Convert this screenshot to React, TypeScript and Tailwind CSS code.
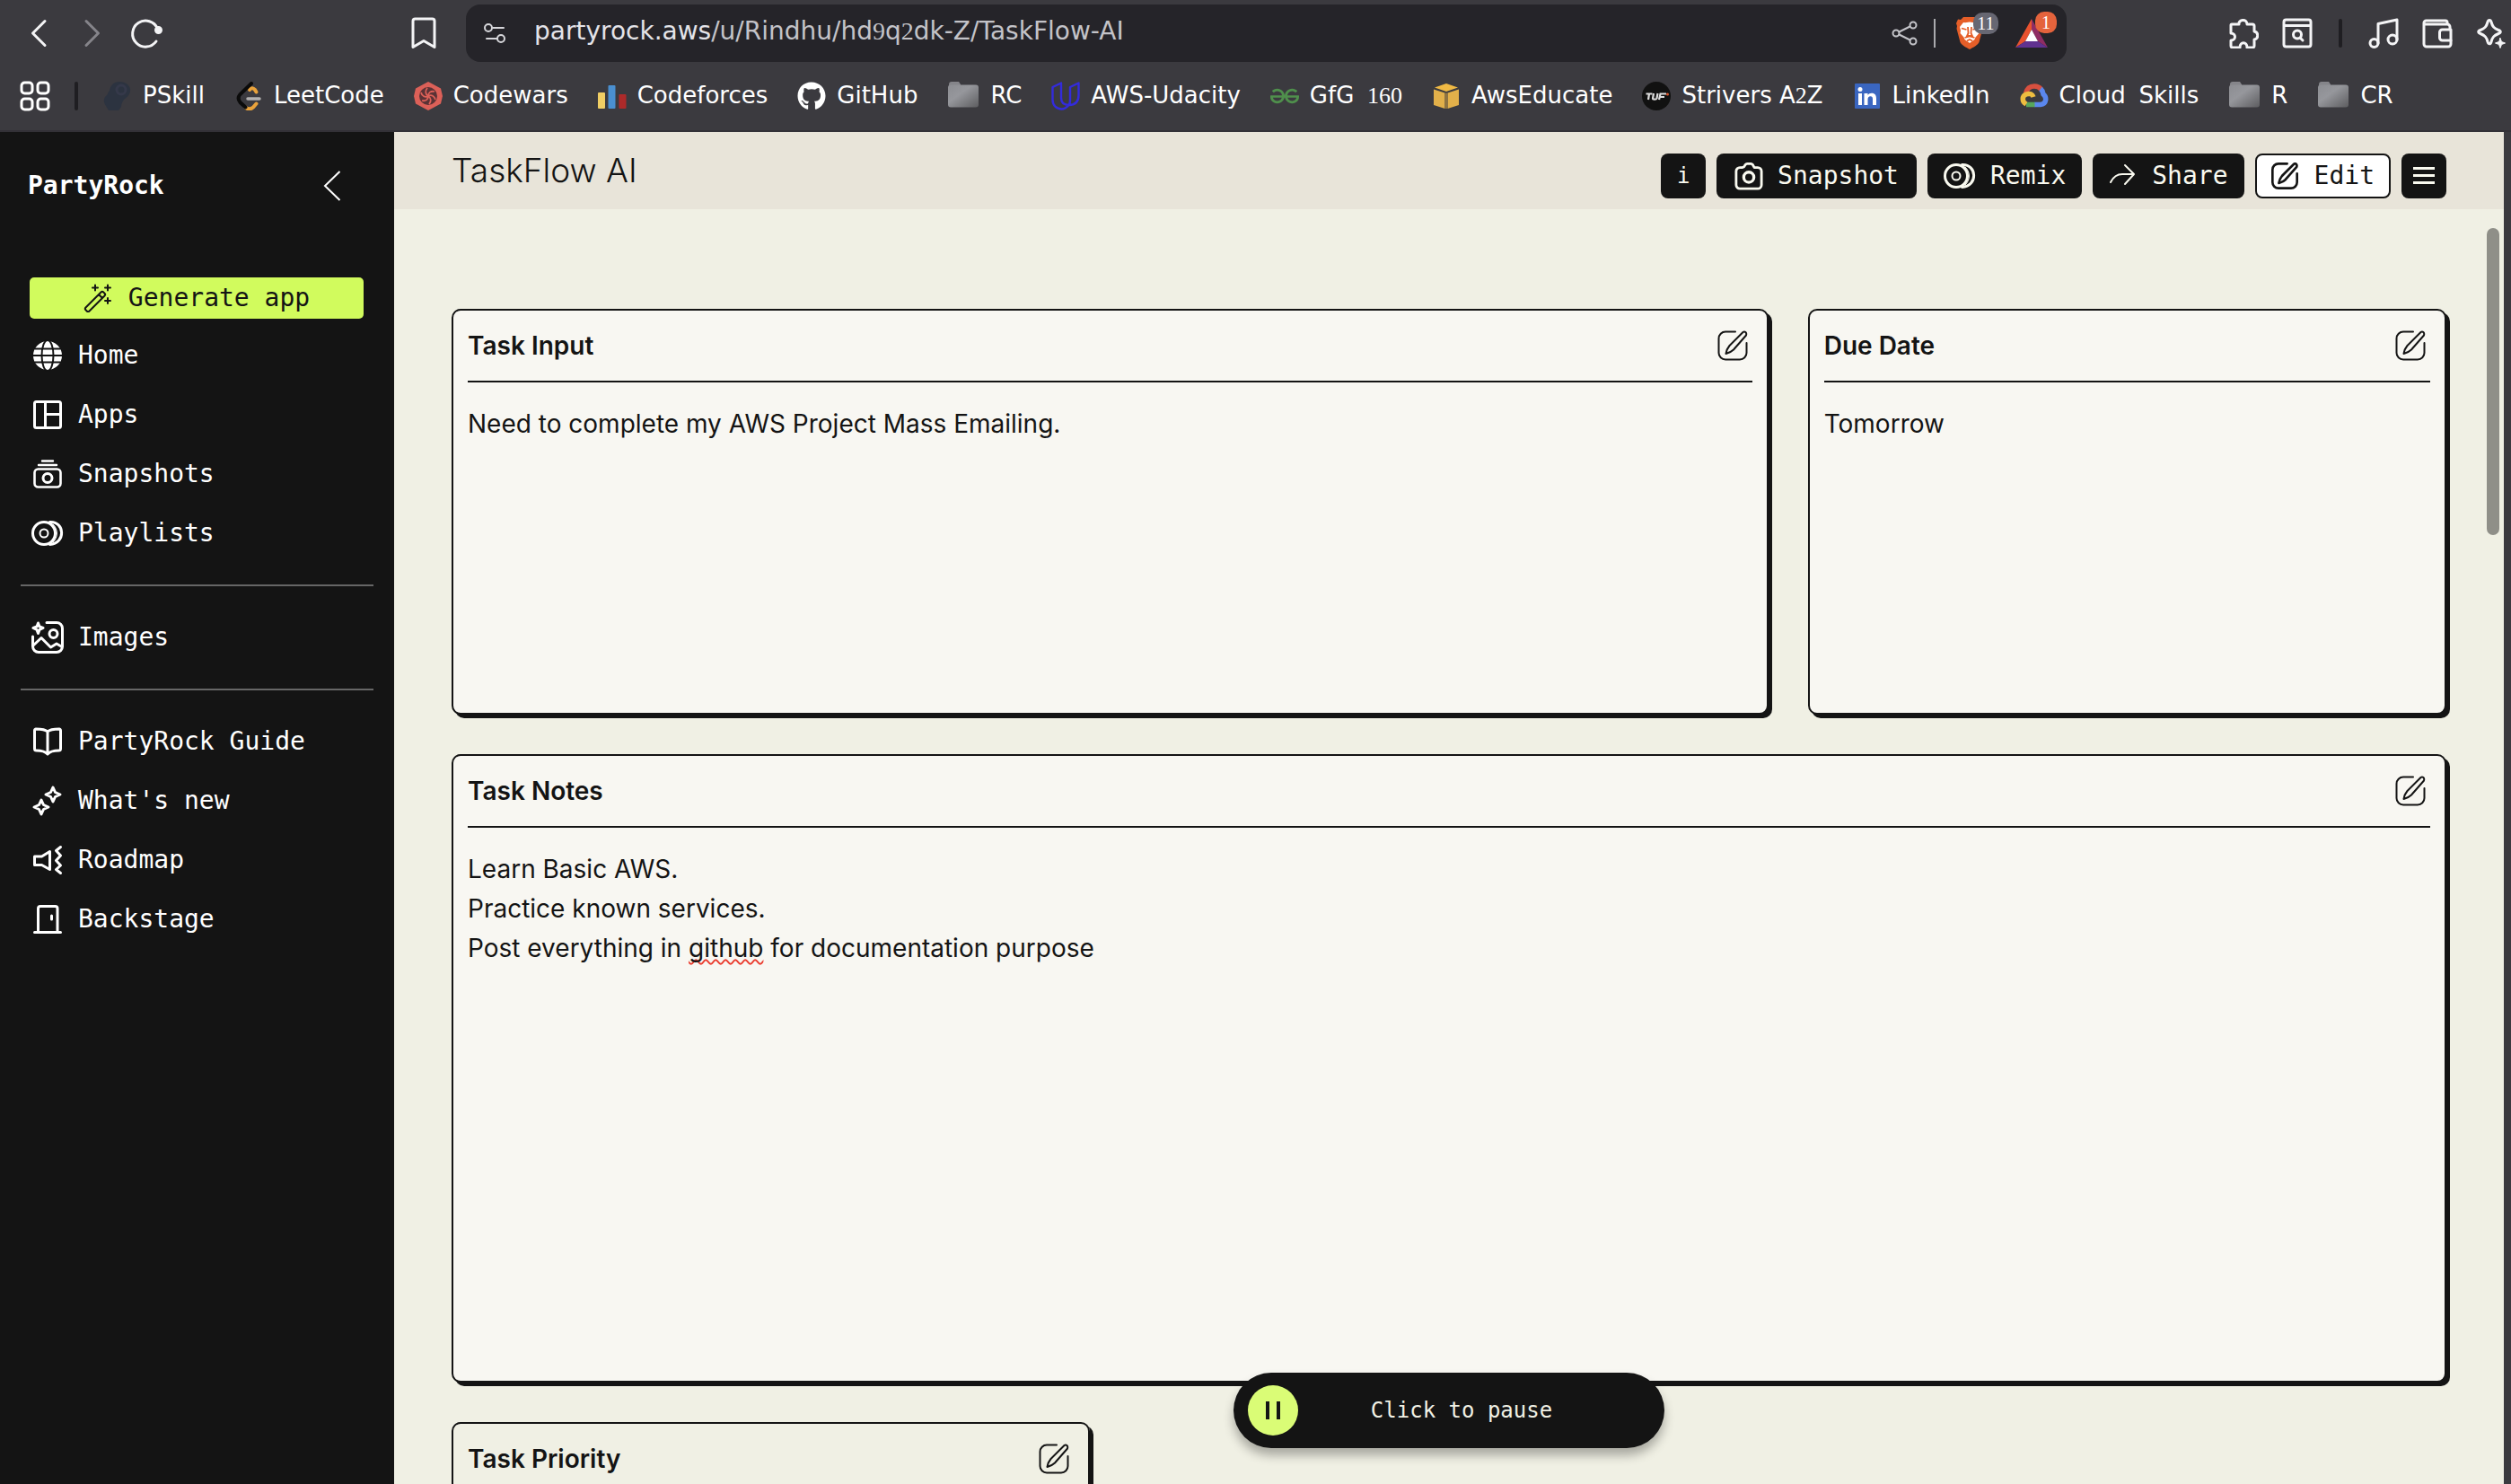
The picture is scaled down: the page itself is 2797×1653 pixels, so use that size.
import type { ReactNode } from "react";
import { FaGithub } from "react-icons/fa";
import { SiGeeksforgeeks } from "react-icons/si";

const MONO = "font-['DejaVu_Sans_Mono','Liberation_Mono',monospace]";

function Digits({ children }: { children: ReactNode }) {
  return <span className="font-['Liberation_Serif',serif]">{children}</span>;
}

/* ---------- toolbar icons ---------- */

function Stroke({
  size = 34,
  width = 3,
  box = 34,
  children,
}: {
  size?: number;
  width?: number;
  box?: number;
  children: ReactNode;
}) {
  return (
    <svg
      width={size}
      height={size}
      viewBox={`0 0 ${box} ${box}`}
      fill="none"
      stroke="currentColor"
      strokeWidth={width}
      strokeLinecap="round"
      strokeLinejoin="round"
      aria-hidden="true"
      className="shrink-0"
    >
      {children}
    </svg>
  );
}

const BackIcon = () => (
  <Stroke size={36} box={36}>
    <path d="M25 4.5 11.5 18 25 31.5" />
  </Stroke>
);
const ForwardIcon = () => (
  <Stroke size={36} box={36}>
    <path d="M11 4.5 24.5 18 11 31.5" />
  </Stroke>
);
const ReloadIcon = () => (
  <Stroke size={36} box={36}>
    <path d="M29 27A14.5 14.5 0 1 1 30.5 13" />
    <circle cx="31.5" cy="14.5" r="3" fill="currentColor" />
  </Stroke>
);
const BookmarkIcon = () => (
  <Stroke size={36} box={36}>
    <path d="M8.5 2h19a2.500 2.500 0 0 1 2.500 2.500V33.500L18 26.500 6 33.500V4.500A2.500 2.500 0 0 1 8.500 2Z" />
  </Stroke>
);
const TuneIcon = () => (
  <Stroke size={28} box={28} width={2}>
    <circle cx="7" cy="8" r="4" />
    <path d="M12 8h12" />
    <circle cx="21" cy="20" r="4" />
    <path d="M5 20h12" />
  </Stroke>
);
const ShareNodesIcon = () => (
  <Stroke size={30} box={30} width={2}>
    <circle cx="5" cy="15" r="3.5" />
    <circle cx="24" cy="6" r="3.5" />
    <circle cx="24" cy="24" r="3.5" />
    <path d="M8.5 13.5 20.5 7.5M8.5 16.5 20.5 22.5" />
  </Stroke>
);
const PuzzleIcon = () => (
  <Stroke width={3}>
    <path d="M4 7h8c-1-5 9-7 9 0h6a2 2 0 0 1 2 2v6c5 1 5 8 0 9v7a2 2 0 0 1-2 2h-6c0-7-8-7-8 0H5a2 2 0 0 1-2-2v-6c6 0 6-8 0-8V8a1 1 0 0 1 1-1Z" />
  </Stroke>
);
const PageSearchIcon = () => (
  <Stroke width={3}>
    <rect x="2" y="2" width="30" height="30" rx="2.5" />
    <path d="M3 8.5h28" />
    <circle cx="17" cy="18.5" r="4.5" />
    <path d="M20.5 22.5 23 25" />
  </Stroke>
);
const MusicIcon = () => (
  <Stroke width={3}>
    <circle cx="6.5" cy="28" r="4.5" />
    <circle cx="27" cy="24" r="5" />
    <path d="M11 28V6.5L32 2v22" />
  </Stroke>
);
const WalletIcon = () => (
  <Stroke width={3}>
    <path d="M31 12V10a3 3 0 0 0-3-3H2.500M28 7V5a2 2 0 0 0-2-2H4.500A2.500 2.500 0 0 0 2 5.500V29a3 3 0 0 0 3 3h24a3 3 0 0 0 3-3v-4" />
    <path d="M32 13v12H22.500a3 3 0 0 1-3-3v-6a3 3 0 0 1 3-3Z" />
  </Stroke>
);
const LeoIcon = () => (
  <Stroke width={3}>
    <path d="M15 2.500c1 0 1.600.6 2 2 1.300 5 3 7 8 9 3 1 3 3 0 4-5 2-6.700 4-8 9-.8 3-3 3-4 0-1.300-5-3-7-8-9-3-1-3-3 0-4 5-2 6.700-4 8-9 .4-1.400 1-2 2-2Z" />
    <path d="M27 22.500 28.500 26.500 32.500 28 28.500 29.500 27 33.500 25.500 29.500 21.500 28 25.500 26.500Z" fill="currentColor" strokeWidth="1" />
  </Stroke>
);
const AppGridIcon = () => (
  <Stroke width={3}>
    <rect x="2" y="2" width="12" height="12" rx="3.5" />
    <rect x="20" y="2" width="12" height="12" rx="3.5" />
    <rect x="2" y="20" width="12" height="12" rx="3.5" />
    <rect x="20" y="20" width="12" height="12" rx="3.5" />
  </Stroke>
);

function BraveIcon() {
  return (
    <svg width="32" height="38" viewBox="0 0 32 38" aria-hidden="true">
      <path d="M9 1h14l3 3 3-.5L31 8l-1 3 .5 3-4 15c-1 3-7 6-10.500 8C12.500 35 6.500 32 5.500 29L1.500 14 2 11 1 8l2-4.500L6 4Z" fill="#e55e28" />
      <path
        d="m16 6.500 5 .8 2-.3 4 5-1 4 .5 3-4 4.500-1 2.500-5.500 4-5.500-4-1-2.500-4-4.500.5-3-1-4 4-5 2 .3Z"
        fill="#fff"
      />
      <path
        d="m7 13.500 5.500 1.500M25 13.500 19.500 15M14 12l.5 7-1.500 3h6l-1.500-3 .5-7M10.500 24l5.500-1.500 5.500 1.500M13 27.500l3-1.500 3 1.500"
        stroke="#e55e28"
        strokeWidth="1.8"
        fill="none"
      />
    </svg>
  );
}

function RewardsIcon() {
  return (
    <svg width="36" height="32" viewBox="0 0 36 32" aria-hidden="true">
      <path d="M18 0 0 32 11 25 18 12Z" fill="#e8522f" />
      <path d="M18 0 36 32 25 25 18 12Z" fill="#8f2d63" />
      <path d="M0 32h36L25 25H11Z" fill="#613290" />
      <path d="M18 12 25 25H11Z" fill="#fff" />
    </svg>
  );
}

/* ---------- bookmark favicons ---------- */

const PSkillIcon = () => (
  <svg width="32" height="32" viewBox="0 0 32 32" aria-hidden="true">
    <path
      d="M18 0c8 0 13 5 12 11-1 5-5 7-7 9-2 3-3 5-3 8l-3 4H6l-3-5c-3-4-3-9 1-12 1-1 1-3 3-5C8 4 12 0 18 0Z"
      fill="#2c3340"
    />
    <circle cx="20" cy="9" r="5" fill="none" stroke="#35394a" strokeWidth="3" />
  </svg>
);
const LeetCodeIcon = () => (
  <svg width="32" height="32" viewBox="0 0 32 32" fill="none" strokeLinecap="round" aria-hidden="true">
    <path d="M17 9c2-2.500 4-2 6 0l1.500 2.500" stroke="#e9a23b" strokeWidth="4" />
    <path d="M24.500 24.500 21 28.500c-3 2.500-6 2.500-8.500 0" stroke="#e9a23b" strokeWidth="4" />
    <path d="M19 2 6.500 14c-2.500 3-2.500 6 0 9l6 5.500" stroke="#0b0b0b" strokeWidth="4" />
    <path d="M15 19h13" stroke="#b3b1b1" strokeWidth="3.5" />
  </svg>
);
const CodewarsIcon = () => (
  <svg width="32" height="32" viewBox="0 0 32 32" aria-hidden="true">
    <path d="M16 0 30 7.500 32 16 30 24.500 16 32 2 24.500 0 16 2 7.500Z" fill="#dc6058" />
    <circle cx="16" cy="16" r="10" fill="#5a3235" />
    <g fill="none" stroke="#dc6058" strokeWidth="1.8">
      <path d="M16 16c0-4 3-6 7-5M16 16c3.500-2 7 0 8 4M16 16c3.500 2 3.500 6 1 9M16 16c0 4-3 6-7 5M16 16c-3.500 2-7 0-8-4M16 16c-3.500-2-3.500-6-1-9" />
    </g>
  </svg>
);
const CodeforcesIcon = () => (
  <svg width="32" height="32" viewBox="0 0 32 32" aria-hidden="true">
    <rect x="0" y="12" width="8" height="18" rx="1" fill="#f0ce64" />
    <rect x="11.5" y="4" width="8" height="26" rx="1" fill="#4a8fd0" />
    <rect x="23.5" y="14" width="8" height="16" rx="1" fill="#ad2a2a" />
  </svg>
);
const FolderIcon = () => (
  <svg width="36" height="32" viewBox="0 0 36 32" aria-hidden="true">
    <defs>
      <linearGradient id="folder" x1="0" y1="0" x2="1" y2="1">
        <stop offset="0" stopColor="#8c8d92" />
        <stop offset="0.4" stopColor="#96979c" />
        <stop offset="1" stopColor="#5d5d60" />
      </linearGradient>
    </defs>
    <path d="M2 3a3 3 0 0 1 3-3h8l2 3v4H2Z" fill="#85858a" />
    <rect x="1" y="3.5" width="34" height="25" rx="3" fill="url(#folder)" />
  </svg>
);
const UdacityIcon = () => (
  <svg width="32" height="32" viewBox="0 0 32 32" fill="none" stroke="#332bdc" strokeWidth="2.4" strokeLinejoin="round" aria-hidden="true">
    <path d="M11 1.500 1.500 6v14c0 6.500 4.500 10.500 10 10.500 3 0 5.500-1.500 8-4.500C13 26 11 23 11 18Z" />
    <path d="M30.500 1.500 21 6v14c0 3-.5 5-1.500 6 7 0 11-4 11-11Z" />
  </svg>
);
const AwsEducateIcon = () => (
  <svg width="32" height="32" viewBox="0 0 32 32" aria-hidden="true">
    <path d="M16 2 29 6.500 16 11 3 6.500Z" fill="#efb944" />
    <path d="M2 8.500 14.500 12.500V30L2 26Z" fill="#e2b04a" />
    <path d="M30 8.500 17.500 12.500V30L30 26Z" fill="#e2b04a" />
    <path d="M14.500 12.500h3V30h-3Z" fill="#8f7340" />
  </svg>
);
const TufIcon = () => (
  <svg width="32" height="32" viewBox="0 0 32 32" aria-hidden="true">
    <circle cx="16" cy="16" r="16" fill="#111" />
    <g fill="none" stroke="#dcdcdc" strokeWidth="2.2">
      <path d="M4.500 13.500h7M8 13.500 7 20" />
      <path d="m13 13-1 5.500c0 1.500 4 1.500 4.500 0l1-5.500" />
      <path d="m19 20 1.500-6.500H27M20 17h5" />
    </g>
    <circle cx="28.5" cy="14" r="1.5" fill="#d9542c" />
  </svg>
);
const LinkedInIcon = () => (
  <svg width="32" height="32" viewBox="0 0 32 32" aria-hidden="true">
    <rect x="2" y="2" width="28" height="28" rx="1" fill="#3a66c0" />
    <g fill="#fff">
      <circle cx="8" cy="8.5" r="2.5" />
      <path d="M6 13h4v13H6ZM12.500 13h4v2c1-1.600 2.500-2.300 4.300-2.300 3.700 0 5.200 2.300 5.200 6V26h-4v-6.500c0-2-.7-3.200-2.500-3.200-2 0-3 1.400-3 3.400V26h-4Z" />
    </g>
  </svg>
);
const CloudSkillsIcon = () => (
  <svg width="32" height="32" viewBox="0 0 32 32" fill="none" strokeWidth="5.5" aria-hidden="true">
    <path d="M6.500 13C8 7 12 5 16 5c3 0 6 1.500 7.500 3.500" stroke="#d8503f" />
    <path d="M23 8c2.500 2 2.500 4 3 6 4 3 4 11-3 11.500h-7" stroke="#5a87ee" />
    <path d="M7 25.500h9.500" stroke="#57a65b" />
    <path d="M7 25c-5-3-5-9 0-11 4-1.500 7 0 8 3" stroke="#eebd40" />
  </svg>
);

const bookmarks: { icon: ReactNode; label: ReactNode; name: string }[] = [
  { name: "pskill", icon: <PSkillIcon />, label: "PSkill" },
  { name: "leetcode", icon: <LeetCodeIcon />, label: "LeetCode" },
  { name: "codewars", icon: <CodewarsIcon />, label: "Codewars" },
  { name: "codeforces", icon: <CodeforcesIcon />, label: "Codeforces" },
  { name: "github", icon: <FaGithub className="size-8" />, label: "GitHub" },
  { name: "rc", icon: <FolderIcon />, label: "RC" },
  { name: "udacity", icon: <UdacityIcon />, label: "AWS-Udacity" },
  {
    name: "gfg",
    icon: <SiGeeksforgeeks className="size-8 text-[#4f8f4c]" />,
    label: (
      <>
        GfG <Digits>&nbsp;160</Digits>
      </>
    ),
  },
  { name: "awseducate", icon: <AwsEducateIcon />, label: "AwsEducate" },
  {
    name: "strivers",
    icon: <TufIcon />,
    label: (
      <>
        Strivers A<Digits>2</Digits>Z
      </>
    ),
  },
  { name: "linkedin", icon: <LinkedInIcon />, label: "LinkedIn" },
  {
    name: "cloudskills",
    icon: <CloudSkillsIcon />,
    label: (
      <>
        Cloud <Digits>&nbsp;</Digits>Skills
      </>
    ),
  },
  { name: "r", icon: <FolderIcon />, label: "R" },
  { name: "cr", icon: <FolderIcon />, label: "CR" },
];

function BrowserBar() {
  return (
    <header className="shrink-0 border-b-2 border-[#333137] bg-[#3b3a3f] pb-[5px] font-['DejaVu_Sans',sans-serif] text-[26px] text-[#f4f4f6]">
      <div className="flex h-[74px] items-center">
        <div className="flex w-[490px] shrink-0 items-center gap-6 pl-[25px]">
          <button aria-label="Back"><BackIcon /></button>
          <button aria-label="Forward" className="text-[#85848a]"><ForwardIcon /></button>
          <button aria-label="Reload"><ReloadIcon /></button>
          <button aria-label="Bookmark this page" className="ml-auto"><BookmarkIcon /></button>
        </div>
        <div className="ml-[29px] flex h-16 min-w-0 flex-1 items-center rounded-2xl bg-[#252429] pr-[11px] pl-[18px]">
          <button aria-label="Site settings" className="text-[#d6d6da]"><TuneIcon /></button>
          <div
            role="textbox"
            aria-label="Address"
            contentEditable
            suppressContentEditableWarning
            spellCheck={false}
            className="ml-[30px] min-w-0 flex-1 truncate pb-1 text-[28px] text-[#c3c3c8] outline-none"
          >
            <span className="text-[#e3e3e8]">partyrock.aws</span>/u/Rindhu/hd<Digits>9</Digits>q<Digits>2</Digits>dk-Z/TaskFlow-AI
          </div>
          <button aria-label="Share page" className="text-[#c3c3c8]"><ShareNodesIcon /></button>
          <span className="mr-[22px] ml-[17px] h-8 w-[2px] bg-[#aaaaae]" />
          <button aria-label="Brave Shields, 11 blocked" className="relative">
            <BraveIcon />
            <span className="absolute -top-1 left-[20px] flex h-6 w-7 items-center justify-center rounded-[10px] bg-[#676772] font-['Liberation_Serif',serif] text-xl leading-6 text-white">
              11
            </span>
          </button>
          <button aria-label="Brave Rewards, 1 new" className="relative mr-[10px] ml-[35px]">
            <RewardsIcon />
            <span className="absolute -top-2 left-[22px] flex size-6 items-center justify-center rounded-[10px] bg-[#e4633c] font-['Liberation_Serif',serif] text-xl leading-6 text-white">
              1
            </span>
          </button>
        </div>
        <div className="flex w-[495px] shrink-0 items-center justify-end gap-[26px] pr-[5px]">
          <button aria-label="Extensions"><PuzzleIcon /></button>
          <button aria-label="Search tabs"><PageSearchIcon /></button>
          <span className="mx-[3px] h-8 w-1 rounded-full bg-[#1f1e22]" />
          <button aria-label="Media"><MusicIcon /></button>
          <button aria-label="Wallet"><WalletIcon /></button>
          <button aria-label="Assistant"><LeoIcon /></button>
        </div>
      </div>
      <nav aria-label="Bookmarks" className="flex h-[66px] items-center pl-[22px] whitespace-nowrap text-white">
        <button aria-label="All bookmarks"><AppGridIcon /></button>
        <span className="mr-7 ml-[27px] h-8 w-1 rounded-full bg-[#1f1e22]" />
        <ul className="flex items-center gap-[33px]">
          {bookmarks.map((b) => (
            <li key={b.name}>
              <a href={`#${b.name}`} className="flex items-center gap-3">
                {b.icon}
                <span className="pb-px">{b.label}</span>
              </a>
            </li>
          ))}
        </ul>
      </nav>
    </header>
  );
}

/* ---------- app icons ---------- */

function Glyph({ children, width = 3 }: { children: ReactNode; width?: number }) {
  return (
    <Stroke size={36} box={36} width={width}>
      {children}
    </Stroke>
  );
}

const GlobeIcon = () => (
  <Glyph width={2}>
    <circle cx="18" cy="18" r="16" fill="currentColor" stroke="none" />
    <g stroke="#141414">
      <path d="M2 18h32M4 10.500h28M4 25.500h28" />
      <ellipse cx="18" cy="18" rx="6.5" ry="17" />
    </g>
  </Glyph>
);
const AppsIcon = () => (
  <Glyph>
    <rect x="3.5" y="3.5" width="29" height="29" rx="2" />
    <path d="M15.500 3.500v29M15.500 17.500h17" />
  </Glyph>
);
const SnapshotsIcon = () => (
  <Glyph width={3}>
    <path d="M12 3.500h12M8 8h20" strokeWidth="2.4" />
    <rect x="3.5" y="12.5" width="29" height="20" rx="4" strokeWidth="2.6" />
    <circle cx="18" cy="22.5" r="5" />
  </Glyph>
);
const PlaylistsIcon = ({ size = 36 }: { size?: number }) => (
  <Stroke size={size} box={36}>
    <circle cx="14" cy="18" r="12.5" />
    <circle cx="14" cy="18" r="4.5" strokeWidth="2" />
    <path d="M20.500 5.500c17-1 18 24 0 25" />
    <path d="M24 8c6 5 6 15 0 20" strokeWidth="1" />
  </Stroke>
);
const ImagesIcon = () => (
  <Glyph>
    <path d="M17 1.500h11a6.500 6.500 0 0 1 6.500 6.500v20a6.500 6.500 0 0 1-6.500 6.500H8A6.500 6.500 0 0 1 1.500 28V17" />
    <path d="M7.500 2 9 6l4 1.500L9 9.500l-1.500 4L6 9.500l-4-2L6 6Z" />
    <circle cx="24.5" cy="14" r="4.5" />
    <path d="m2 27 9-8.500 10.500 10.500 6.500-4 6 3.500" />
  </Glyph>
);
const BookIcon = () => (
  <Glyph>
    <path d="M18 7C15 4 9 4 5 4a2 2 0 0 0-1.500 2v20a2 2 0 0 0 2 2c4 0 9 0 12.500 4 3.500-4 8.500-4 12.500-4a2 2 0 0 0 2-2V6A2 2 0 0 0 31 4c-4 0-10 0-13 3Zm0 0v24" />
  </Glyph>
);
const SparklesIcon = () => (
  <Glyph>
    <path d="m24 3 2.500 5.500L32 11l-5.500 2.500L24 19l-2.500-5.500L16 11l5.500-2.500Z" />
    <path d="m11 17 2.500 5.500L19 25l-5.500 2.500L11 33l-2.500-5.500L3 25l5.500-2.500Z" />
  </Glyph>
);
const RoadmapIcon = () => (
  <Glyph>
    <path d="M3.500 14h8l9-5.500v20l-9-5h-8Z" />
    <path d="m32.500 3.500-5 4 5 5.500-5 5.500 5 5.500-5 4.500 5 4" />
  </Glyph>
);
const DoorIcon = () => (
  <Glyph>
    <path d="M3.500 32.500h29M7.500 32V6a2.500 2.500 0 0 1 2.500-2.500h16.500A2.500 2.500 0 0 1 29 6v26M22.500 14v4" />
  </Glyph>
);
const WandIcon = () => (
  <Stroke size={32} box={32} width={2}>
    <path d="M2.500 26.500 19.500 9.500a2 2 0 0 1 2.800 0l1.200 1.200a2 2 0 0 1 0 2.800L6.500 30.500a2 2 0 0 1-2.800 0l-1.200-1.200a2 2 0 0 1 0-2.800ZM17 12l4 4M13 1.500v6M10 4.500h6M27 1.500v6M24 4.500h6M27 16v6M24 19h6" />
  </Stroke>
);
const PencilSquareIcon = ({ size = 34, width = 2 }: { size?: number; width?: number }) => (
  <Stroke size={size} width={width}>
    <path d="M20 1.500H9A7.500 7.500 0 0 0 1.500 9v16A7.500 7.500 0 0 0 9 32.500h16a7.500 7.500 0 0 0 7.500-7.500V14" />
    <path d="M28.500 2c2-1.500 4.500.5 3.500 3.500L18 21.500c-2.500 2.500-5 3.500-8.500 4.500.5-3.500 1.500-6 4-9Z" />
  </Stroke>
);
const CameraIcon = () => (
  <Stroke size={32} box={34}>
    <path d="M11.500 6 13 3.500A2.500 2.500 0 0 1 15 2.500h4.500a2.500 2.500 0 0 1 2 1L23.500 7h4A4.500 4.500 0 0 1 32 11.500V27.500A4.500 4.500 0 0 1 27.500 32H6.500A4.500 4.500 0 0 1 2 27.500V11.500A4.500 4.500 0 0 1 6.500 7h3Z" />
    <circle cx="17" cy="18.5" r="6" strokeWidth="3.5" />
  </Stroke>
);
const ShareArrowIcon = () => (
  <Stroke size={30} box={30} width={2}>
    <path d="M2 22c3-6 7-9 13-9h12M18 3l10 10-10 11" />
  </Stroke>
);

/* ---------- sidebar ---------- */

function NavItem({ icon, label }: { icon: ReactNode; label: string }) {
  return (
    <li>
      <a href={`#${label.toLowerCase().replace(/[^a-z]+/g, "-")}`} className="flex h-[66px] items-center gap-4 pl-3">
        {icon}
        <span>{label}</span>
      </a>
    </li>
  );
}

function Sidebar() {
  return (
    <aside className={`w-[439px] shrink-0 bg-[#141414] px-[23px] text-[28px] leading-9 text-white ${MONO}`}>
      <div className="mt-[42px] flex h-9 items-center justify-between pr-9 pl-2">
        <strong className="font-bold">PartyRock</strong>
        <button aria-label="Collapse sidebar">
          <svg width="20" height="36" viewBox="0 0 20 36" fill="none" stroke="currentColor" strokeWidth="2" aria-hidden="true">
            <path d="M18.500 2 2 18l16.500 16" />
          </svg>
        </button>
      </div>
      <button className="mx-[10px] mt-[84px] mb-2 flex h-[46px] w-[372px] items-center justify-center gap-[18px] rounded-[5px] bg-[#d1fb5d] text-[#141414]">
        <WandIcon />
        Generate app
      </button>
      <nav aria-label="Main">
        <ul>
          <NavItem icon={<GlobeIcon />} label="Home" />
          <NavItem icon={<AppsIcon />} label="Apps" />
          <NavItem icon={<SnapshotsIcon />} label="Snapshots" />
          <NavItem icon={<PlaylistsIcon />} label="Playlists" />
        </ul>
        <hr className="my-6 border-t-2 border-[#666]" />
        <ul>
          <NavItem icon={<ImagesIcon />} label="Images" />
        </ul>
        <hr className="my-6 border-t-2 border-[#666]" />
        <ul>
          <NavItem icon={<BookIcon />} label="PartyRock Guide" />
          <NavItem icon={<SparklesIcon />} label="What's new" />
          <NavItem icon={<RoadmapIcon />} label="Roadmap" />
          <NavItem icon={<DoorIcon />} label="Backstage" />
        </ul>
      </nav>
    </aside>
  );
}

/* ---------- main ---------- */

function Card({ id, title, className, children }: { id: string; title: string; className: string; children?: ReactNode }) {
  return (
    <section
      className={`rounded-[10px] border-2 border-[#141414] px-4 text-[28px] leading-[44px] text-[#141414] shadow-[4px_4px_0_#141414] ${className}`}
    >
      <div className="flex h-20 items-center justify-between border-b-2 border-[#141414]">
        <h2 id={`${id}-title`} className="font-semibold">{title}</h2>
        <button aria-label={`Edit ${title}`} className="mr-[5px]">
          <PencilSquareIcon />
        </button>
      </div>
      <div
        role="textbox"
        aria-multiline="true"
        aria-labelledby={`${id}-title`}
        contentEditable
        suppressContentEditableWarning
        spellCheck={false}
        className="pt-6 outline-none"
      >
        {children}
      </div>
    </section>
  );
}

const darkButton = "flex h-[50px] items-center justify-center rounded-lg bg-[#141414] text-[#fafaf0]";

export default function App() {
  return (
    <div className="flex h-screen flex-col overflow-hidden">
      <BrowserBar />
      <div className="flex min-h-0 flex-1 bg-[#3b3a3f]">
        <Sidebar />
        <main className="relative mr-2 min-w-0 flex-1 overflow-hidden bg-[#f0f0e4] font-['Inter',sans-serif]">
          <div className="flex h-[86px] items-center justify-between bg-[#e8e4d9] px-16 pt-3">
            <h1 className="pb-3 text-[37px] leading-[50px] font-light text-[#141414]">TaskFlow AI</h1>
            <div className={`flex gap-3 text-[28px] ${MONO}`}>
              <button aria-label="App information" className={`${darkButton} w-[50px] text-[24px]`}>i</button>
              <button className={`${darkButton} gap-4 px-5`}><CameraIcon />Snapshot</button>
              <button className={`${darkButton} gap-4 px-[18px]`}><PlaylistsIcon />Remix</button>
              <button className={`${darkButton} gap-[18px] px-[18px]`}><ShareArrowIcon />Share</button>
              <button className="flex h-[50px] items-center justify-center gap-[18px] rounded-lg border-2 border-[#141414] bg-white px-4 text-[#141414]">
                <PencilSquareIcon size={30} width={3} />
                Edit
              </button>
              <button aria-label="Menu" className={`${darkButton} w-[50px]`}>
                <svg width="24" height="20" viewBox="0 0 24 20" fill="currentColor" aria-hidden="true">
                  <path d="M0 0h24v3H0zM0 8h24v3H0zM0 16h24v3H0z" />
                </svg>
              </button>
            </div>
          </div>

          <div className="grid grid-cols-3 gap-11 px-16 pt-[111px]">
            <Card id="input" title="Task Input" className="col-span-2 min-h-[452px] bg-[#f8f7f2]">
              Need to complete my AWS Project Mass Emailing.
            </Card>
            <Card id="due" title="Due Date" className="min-h-[452px] bg-[#f8f7f2]">
              Tomorrow
            </Card>
            <Card id="notes" title="Task Notes" className="col-span-3 min-h-[700px] bg-[#f8f7f2]">
              <p>Learn Basic AWS.</p>
              <p>Practice known services.</p>
              <p>
                Post everything in{" "}
                <span className="underline decoration-[#ea3b2e] decoration-wavy decoration-2 underline-offset-2 [text-decoration-skip-ink:none]">
                  github
                </span>{" "}
                for documentation purpose
              </p>
            </Card>
            <Card id="priority" title="Task Priority" className="min-h-[300px]" />
          </div>

          <div className="absolute top-[107px] right-[5px] h-[342px] w-[14px] rounded-full bg-[#8f8f88]" />

          <button
            className={`absolute bottom-10 left-1/2 flex h-[84px] w-[480px] -translate-x-1/2 items-center rounded-full bg-[#141414] pr-11 pl-4 text-[24px] text-[#f0f0e4] shadow-[0_8px_12px_rgba(0,0,0,0.3)] ${MONO}`}
          >
            <span className="flex size-14 shrink-0 items-center justify-center gap-2 rounded-full bg-[#dafc76]">
              <span className="h-5 w-1 bg-[#141414]" />
              <span className="h-5 w-1 bg-[#141414]" />
            </span>
            <span className="flex-1 text-center">Click to pause</span>
          </button>
        </main>
      </div>
    </div>
  );
}
